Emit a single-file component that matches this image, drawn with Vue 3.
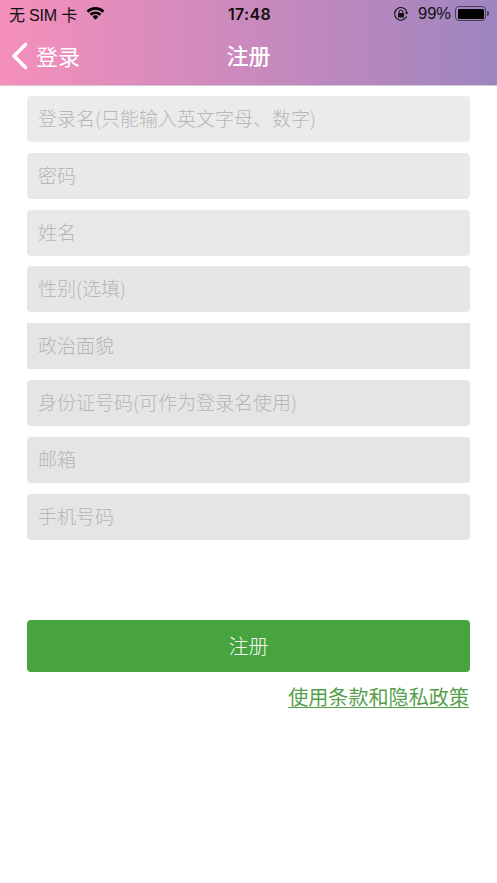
<script setup>
const fields = [
  { label: '登录名(只能输入英文字母、数字)', shade: '#ebebeb' },
  { label: '密码', shade: '#e9e9e9' },
  { label: '姓名', shade: '#e8e8e8' },
  { label: '性别(选填)', shade: '#e6e6e6' },
  { label: '政治面貌', shade: '#e5e5e5', square: true },
  { label: '身份证号码(可作为登录名使用)', shade: '#e5e5e5' },
  { label: '邮箱', shade: '#e5e5e5' },
  { label: '手机号码', shade: '#e5e5e5' }
]
</script>

<template>
  <div class="page">
    <header class="head">
      <div class="status">
        <div class="status-left">
          <span class="carrier">无 SIM 卡</span>
          <svg class="wifi" width="19" height="14" viewBox="0 0 19 14">
            <path d="M0.6 4.7 A12.6 12.6 0 0 1 18.4 4.7 L16.5 6.7 A10 10 0 0 0 2.5 6.7 Z" fill="#000"/>
            <path d="M3.6 7.8 A8.4 8.4 0 0 1 15.4 7.8 L13.5 9.7 A5.7 5.7 0 0 0 5.5 9.7 Z" fill="#000"/>
            <path d="M6.6 10.8 A4.1 4.1 0 0 1 12.4 10.8 L9.5 13.7 Z" fill="#000"/>
          </svg>
        </div>
        <span class="time">17:48</span>
        <div class="status-right">
          <svg class="lock" width="16" height="16" viewBox="0 0 16 16">
            <path d="M13.6 10.6 A6.3 6.3 0 1 1 13.8 5.6" fill="none" stroke="#111" stroke-width="1.1"/>
            <path d="M15.6 6.6 L13 8.4 L12 5.4 Z" fill="#111"/>
            <rect x="5" y="7" width="6" height="4.6" rx="0.6" fill="#111"/>
            <path d="M6.2 7 V5.8 A1.8 1.8 0 0 1 9.8 5.8 V7" fill="none" stroke="#111" stroke-width="1"/>
          </svg>
          <span class="pct">99%</span>
          <div class="battery">
            <div class="battery-body"><div class="battery-fill"></div></div>
            <div class="battery-tip"></div>
          </div>
        </div>
      </div>
      <div class="nav">
        <div class="back">
          <svg width="19" height="30" viewBox="0 0 19 30">
            <path d="M15.5 3.5 L4 15 L15.5 26.5" fill="none" stroke="#fff" stroke-width="3.6" stroke-linecap="round" stroke-linejoin="round"/>
          </svg>
          <span class="back-label">登录</span>
        </div>
        <div class="title">注册</div>
      </div>
    </header>

    <main class="body">
      <div class="fields">
        <div
          v-for="f in fields"
          :key="f.label"
          class="field"
          :class="{ square: f.square }"
          :style="{ backgroundColor: f.shade }"
        >{{ f.label }}</div>
      </div>
      <button class="submit" type="button">注册</button>
      <div class="terms"><a class="terms-link">使用条款和隐私政策</a></div>
    </main>
  </div>
</template>

<style scoped>
.page {
  width: 497px;
  height: 883px;
  background: #fff;
  overflow: hidden;
  font-family: "Noto Sans CJK SC", "Liberation Sans", sans-serif;
}
.head {
  height: 86px;
  box-sizing: border-box;
  background: linear-gradient(90deg, #f68fbb 0%, #9e85bf 100%);
  border-bottom: 1px solid #cfc9d3;
}
.status {
  height: 27px;
  padding: 0 8px 0 9px;
  display: grid;
  grid-template-columns: 1fr auto 1fr;
  align-items: center;
  color: #111;
  font-size: 16px;
  font-family: "Liberation Sans", "Noto Sans CJK SC", sans-serif;
}
.status-left {
  display: flex;
  align-items: center;
  gap: 9px;
}
.carrier {
  letter-spacing: -0.2px;
}
.wifi {
  margin-top: -2px;
}
.time {
  font-size: 16px;
  letter-spacing: 0.3px;
  font-family: "Inter", "Liberation Sans", sans-serif;
  font-weight: 600;
  padding-left: 1px;
}
.status-right {
  display: flex;
  align-items: center;
  justify-content: flex-end;
}
.lock {
  margin-right: 9px;
}
.pct {
  font-size: 16.5px;
  margin-right: 4px;
}
.battery {
  display: flex;
  align-items: center;
}
.battery-body {
  width: 31px;
  height: 15px;
  box-sizing: border-box;
  border: 1px solid #4a3d52;
  border-radius: 4px;
  padding: 1.5px;
}
.battery-fill {
  height: 100%;
  background: #000;
  border-radius: 1.5px;
}
.battery-tip {
  width: 2px;
  height: 5px;
  background: #4a3d52;
  border-radius: 0 2px 2px 0;
  margin-left: 1px;
}
.nav {
  position: relative;
  height: 58px;
  box-sizing: border-box;
  padding-bottom: 5px;
  display: flex;
  align-items: center;
  justify-content: center;
  color: #fff;
}
.back {
  position: absolute;
  left: 10px;
  top: 14px;
  display: flex;
  align-items: center;
  gap: 7px;
  font-size: 22px;
  line-height: 30px;
}
.back-label {
  margin-top: -3px;
}
.title {
  font-size: 22px;
  line-height: 30px;
  font-weight: 500;
}
.body {
  padding: 10px 27px 0;
}
.fields {
  display: flex;
  flex-direction: column;
  gap: 10.8px;
}
.field {
  height: 46px;
  line-height: 44px;
  padding-left: 11px;
  border-radius: 4px;
  color: #b6b6b6;
  font-size: 19px;
  font-weight: 300;
}
.field.square {
  border-radius: 0;
}
.submit {
  display: block;
  width: 100%;
  height: 52px;
  margin-top: 80px;
  border: 0;
  border-radius: 4px;
  background: #47a43e;
  color: #f6faf5;
  font-family: inherit;
  font-size: 20px;
  font-weight: 300;
  padding: 0;
}
.terms {
  text-align: right;
  margin-top: 10.6px;
  padding-right: 1px;
}
.terms-link {
  color: #559f4c;
  font-size: 20.1px;
  text-decoration: underline;
  text-underline-offset: 2px;
  text-decoration-thickness: 1px;
}
</style>
